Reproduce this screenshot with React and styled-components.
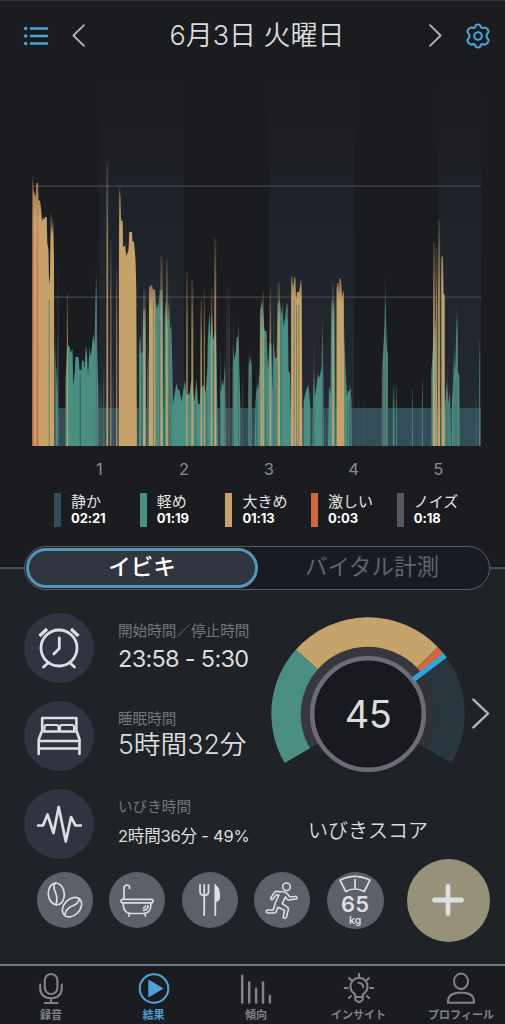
import React from 'react'
import styled, { createGlobalStyle, ThemeProvider } from 'styled-components'

const theme = {
  bg: '#1b1c20',
  panel: '#1f2226',
  blue: '#4da3d6',
  teal: '#4a8f82',
  tan: '#c7a36c',
  orange: '#cf6840',
  quiet: '#344e59',
  noise: '#58595d',
  text: '#dcdddf',
  muted: '#75777a',
  sans: 'Inter, "Noto Sans CJK JP", sans-serif',
}

const GlobalStyle = createGlobalStyle`
  * { box-sizing: border-box; }
  body {
    margin: 0;
    background: ${theme.bg};
  }
`

const Screen = styled.div`
  display: flex;
  flex-direction: column;
  width: 505px;
  height: 1024px;
  overflow: hidden;
  border-top: 1px solid #303136;
  background: linear-gradient(${theme.bg} 567px, ${theme.panel} 567px);
  color: ${props => props.theme.text};
  font-family: ${props => props.theme.sans};
  svg { display: block; flex: none; }
`

const Header = styled.header`
  display: flex;
  align-items: center;
  height: 71px;
  padding: 0 14px 2px 23px;
  h1 {
    flex: 1;
    margin: 0;
    text-align: center;
    font-size: 27px;
    font-weight: 350;
    line-height: 36px;
    white-space: nowrap;
  }
`

const IconButton = styled.button`
  display: flex;
  padding: 0;
  margin: 0 ${props => props.$right || 0}px 0 ${props => props.$left || 0}px;
  border: 0;
  background: none;
  color: ${props => props.$accent ? props.theme.blue : '#b4b5b8'};
`

const ChartBox = styled.div`
  height: 374px;
  padding: 4px 24px 0 32px;
`

const Hours = styled.div`
  display: grid;
  grid-template-columns: repeat(5, 84.75px);
  height: 47px;
  padding-left: 57px;
  text-align: center;
  font-size: 16.5px;
  line-height: 46px;
  color: #8b8c90;
`

const Legend = styled.div`
  display: grid;
  grid-template-columns: repeat(5, 85.7px);
  height: 53px;
  padding-left: 54px;
`

const LegendItem = styled.div`
  height: 34px;
  border-left: 7px solid ${props => props.theme[props.$color]};
  padding-left: 10px;
  white-space: nowrap;
  span, strong { display: block; }
  span {
    font-size: 15px;
    line-height: 18px;
    color: #e2e3e5;
  }
  strong {
    font-size: 13px;
    font-weight: 700;
    line-height: 15px;
    letter-spacing: -0.1px;
    color: #fff;
  }
`

const TabsRow = styled.div`
  display: flex;
  align-items: center;
  height: 44px;
  &::before, &::after {
    content: '';
    height: 2px;
    background: #4c4e52;
  }
  &::before { width: 24px; }
  &::after { flex: 1; }
`

const Tabs = styled.div`
  display: flex;
  width: 466px;
  height: 44px;
  padding: 1px;
  border: 1px solid #5b5d61;
  border-radius: 22px;
  background: #181b23;
`

const Tab = styled.button`
  width: ${props => props.$active ? 232 : 228}px;
  height: 40px;
  padding: 0 0 2px;
  border: ${props => props.$active ? '3px solid #5296ba' : '0'};
  border-radius: 20px;
  background: ${props => props.$active ? '#313541' : 'none'};
  color: ${props => props.$active ? '#fff' : '#626468'};
  font-family: inherit;
  font-size: 22.5px;
  font-weight: ${props => props.$active ? 500 : 400};
  line-height: 32px;
`

const Summary = styled.section`
  display: flex;
  height: 269px;
`

const Stats = styled.div`
  display: flex;
  flex-direction: column;
  gap: 18px;
  width: 247px;
  padding: 23px 0 0 24px;
`

const Stat = styled.div`
  display: flex;
  height: 70px;
  gap: 24px;
`

const Disc = styled.div`
  display: flex;
  flex: none;
  flex-direction: column;
  align-items: center;
  justify-content: center;
  width: ${props => props.$size}px;
  height: ${props => props.$size}px;
  border-radius: 50%;
  background: ${props => props.$bg || '#5c6069'};
  color: #dddee1;
`

const StatText = styled.div`
  white-space: nowrap;
  small {
    display: block;
    height: 33px;
    font-size: 14.6px;
    line-height: 36px;
    color: ${props => props.theme.muted};
  }
  span {
    display: block;
    font-size: ${props => props.$size}px;
    font-weight: ${props => props.$weight || 400};
    line-height: ${props => props.$line}px;
    letter-spacing: ${props => props.$spacing || 0}px;
  }
`

const Score = styled.div`
  display: flex;
  flex-direction: column;
  align-items: center;
  width: 202px;
  margin-left: 20px;
  padding-top: 22.5px;
  p {
    margin: 0;
    font-size: 20px;
    font-weight: 350;
    line-height: 26px;
    padding-top: 43px;
  }
`

const NextScore = styled(IconButton)`
  align-self: flex-start;
  margin: 108px 0 0 3px;
`

const Factors = styled.section`
  display: flex;
  align-items: center;
  height: 105px;
  padding: 0 0 23px 37px;
  gap: 16.4px;
`

const Weight = styled(Disc)`
  justify-content: flex-start;
  padding-top: 3px;
  b {
    font-size: 22px;
    font-weight: 600;
    line-height: 22px;
  }
  i {
    font-size: 10.5px;
    font-style: normal;
    font-weight: 600;
    line-height: 11px;
  }
`

const AddButton = styled(Disc)`
  margin-left: 7px;
`

const NavBar = styled.nav`
  display: flex;
  justify-content: space-between;
  height: 60px;
  border-top: 2px solid #77797c;
  padding: 6px 1px 0 8px;
  background: ${props => props.theme.bg};
`

const NavItem = styled.a`
  display: flex;
  flex-direction: column;
  align-items: center;
  width: 86px;
  color: ${props => props.$active ? props.theme.blue : '#828387'};
  span {
    font-size: 11px;
    font-weight: 600;
    line-height: 16px;
    padding-top: 3px;
    white-space: nowrap;
  }
`

// filled silhouettes, in chart coordinates with the baseline at 446
const areas = [
  ['tan', '32.3,446 32.5,178 33.5,190 35.5,197 36.5,183 38,183 38.5,200 40,201 41,208 42,222 43,217 44,220 45,217 46.7,217 47.3,243 48.5,250 49,285 50,275 51,215 52,235 53.2,222 54,260 54.3,446'],
  ['teal', '54.6,446 54.6,345 55.5,365 56.4,370 57.2,400 57.8,330 58.4,446'],
  ['teal', '65.5,446 65.5,380 67,350 68.5,345 70,348 70.5,353 72.5,349 73.2,386 74.8,372 75.5,357 78.5,357 79.5,370 81.5,370 82,360 83.5,361 84.3,369 86,345 87,355 88,376 89.6,347 90.5,357 91.7,350 92.2,343 93.6,334 94.5,345 95.5,300 96.2,275 96.9,310 97.2,345 98.4,390 98.4,446'],
  ['tan', '118.8,446 119,255 119.5,190 120.4,197 121,220 122.7,221 123,247 124.8,246 125,243 126.2,256 128.5,250 129.3,232 132,232 132.4,241 134,242 134.5,247 135.5,260 136.3,290 136.9,446'],
  ['teal', '139,446 139.3,345 140.2,335 141,354 142.6,352 143,310 145.5,310 146.2,446'],
  ['teal', '147.4,446 147.6,375 148.4,350 149,446'],
  ['teal', '155.6,446 155.8,300 157,308 158.5,303 159.8,290 162.5,290 163,340 163.8,446'],
  ['teal', '164.3,446 164.5,320 165.5,301 166.6,305 167.6,330 168.4,300 169.5,315 170.3,330 171.3,326 172.2,360 173,405 174.5,395 176.5,383 178,390 179.5,390 181.5,402 183,392 185,380 186.3,395 189.5,394 191,383 192,380 193.5,393 194.5,402 196.5,379 198,404 199.6,404 201,388 204,385 205.5,394 207.3,370 207.8,340 209.5,310 210.5,340 212,312 213,340 216,330 217,385 218,446'],
  ['tan', '149,446 149,287 152,285 153,290 155,289 155.6,300 155.6,446'],
  ['teal', '220,446 220,388 221,392 222,380 223.5,386 225,362 226,446'],
  ['teal', '232.5,446 232.7,368 233.4,345 234.2,360 235.8,352 236.5,337 238,337 238.6,326 239.4,370 240.4,408 240.4,446'],
  ['teal', '248.2,446 248.3,400 248.9,354 249.6,364 250.6,356 251.7,365 252,446'],
  ['teal', '254.5,446 255.5,401 257,384 258,391 259.6,370 260,310 262.5,301 264.4,330 266.5,332 268,370 269.5,342 271.5,345 272.3,395 273.2,340 275,358 276.5,358 277.6,305 280,300 281.3,315 282.5,303 283.5,327 285,318 286.7,303 287.7,304 288.5,372 290,372 291.5,446'],
  ['teal', '303.6,446 303.6,402 305,395 306.5,389 308.4,384 309.3,395 310.3,408 310.3,446'],
  ['tan', '291,446 291.2,277 292,276 293,287 294.5,276 295.6,279 296,300 297,292 299,292 300,286 301.2,278 301.7,290 302.4,446'],
  ['teal', '312.5,446 313,395 314,372 315,396 316.3,388 318,374 319.4,378 321.6,368 322.4,325 323.3,375 323.8,446'],
  ['teal', '328,446 329,386 330.5,395 331.3,302 332,299 332.9,310 334.3,298 335.8,446'],
  ['teal', '343.8,446 344,325 345.3,365 347,396 348,392 349.5,390 350.5,388 351.4,402 351.7,446'],
  ['tan', '336.3,446 336.5,290 337.5,283 338.5,283 339,294 339.5,279 340.6,278 341.3,284 342.1,297 343.8,290 344.2,446'],
  ['teal', '382,446 382.2,380 383.3,350 384.5,325 385.3,290 386.4,335 387,350 388,355 388,446'],
  ['teal', '431.4,446 431.4,372 432.5,355 434,330 435.6,320 438,446'],
  ['teal', '445,446 445.2,405 447,380 448.5,405 450,391 450.9,446'],
  ['tan', '441.2,446 441.2,257 443,256 443.5,293 444.7,296 444.8,446'],
  ['teal', '451.7,446 452,402 453,385 454,355 455,375 456,340 456.8,313 457.7,330 458,373 459.3,375 459.6,446'],
]

// thin lines that fade out at the top: colour, x, top, width
const spikes = [
  ['orange', 33.2, 176, 1.2], ['orange', 37.4, 183, 1.8], ['tan', 50.8, 213, 1], ['tan', 52.5, 217, 1.2],
  ['noise', 55.5, 325, 1], ['noise', 58.1, 266, 1],
  ['tan', 67.4, 293, 1.1], ['quiet', 80.2, 365, 0.8], ['noise', 96.2, 265, 1],
  ['noise', 99.8, 382, 1.2], ['noise', 101.5, 390, 1.4], ['teal', 103.8, 367, 0.8],
  ['tan', 107.3, 162, 1.7], ['tan', 110.9, 240, 0.9], ['noise', 113.2, 370, 1.2], ['tan', 116.7, 270, 1],
  ['tan', 119.7, 188, 1.5], ['teal', 139.6, 338, 1], ['noise', 141.6, 300, 1],
  ['tan', 144.3, 290, 2.4], ['noise', 147.7, 330, 1],
  ['tan', 161.5, 256, 2.3], ['tan', 166.9, 260, 1.7], ['noise', 169.3, 280, 1.1], ['noise', 171, 298, 1],
  ['tan', 187, 272, 1.4], ['tan', 192.3, 280, 2], ['tan', 201.2, 300, 1.7], ['tan', 204.3, 289, 1],
  ['tan', 211.6, 289, 1.4], ['tan', 215.2, 239, 2],
  ['noise', 220.5, 350, 1.1], ['noise', 224.9, 350, 1], ['noise', 226.8, 290, 1], ['noise', 229, 286, 1.5],
  ['noise', 233.3, 320, 1], ['noise', 238.5, 316, 1], ['noise', 242.7, 370, 1],
  ['noise', 249, 350, 1], ['noise', 251, 351, 1], ['noise', 257, 370, 1],
  ['tan', 261.3, 300, 1.5], ['tan', 263.2, 292, 1.5], ['tan', 270.4, 290, 1.5], ['noise', 273.8, 305, 1],
  ['tan', 278.8, 282, 2.4], ['tan', 333, 284, 1.7],
  ['noise', 314.1, 342, 1.2], ['noise', 322.5, 313, 1],
  ['noise', 350.2, 382, 1.5], ['noise', 358.6, 396, 0.7], ['noise', 364, 402, 0.7],
  ['noise', 382.3, 355, 1.5], ['noise', 385.4, 278, 1.2], ['noise', 387.4, 330, 0.9],
  ['teal', 393.7, 385, 1.7], ['teal', 396.6, 384, 0.9], ['teal', 412.4, 389, 0.9],
  ['teal', 422.5, 379, 0.9], ['noise', 421, 400, 0.7],
  ['tan', 434, 242, 2], ['tan', 436.4, 248, 1.7], ['tan', 439, 220, 2.2], ['teal', 442, 265, 0.5],
  ['noise', 447.2, 369, 1], ['noise', 454, 335, 1], ['noise', 457, 304, 1],
  ['noise', 476.3, 395, 1], ['teal', 479.6, 340, 1],
]

// narrow gaps between the bars: x, top
const slits = [
  [48.7, 300], [79.9, 375], [101.7, 405], [105.2, 405], [137.5, 408], [142.4, 355], [153.2, 300],
  [159.6, 320], [164.1, 340], [186.2, 400], [195.5, 404], [200, 404], [206.5, 394], [213.3, 350],
  [250.2, 375], [256.4, 400], [265.5, 340], [276.8, 365], [280.7, 320], [293.7, 300], [296.1, 305],
  [298.4, 305], [332, 310], [335.5, 300], [347.2, 400], [349, 400], [383.4, 370], [437.4, 300],
  [440.6, 290], [446, 405], [448.6, 405], [455.4, 380],
]

const NoiseChart = () => (
  <svg width="449" height="370" viewBox="32 76 449 370">
    <defs>
      <linearGradient id="band" x1="0" y1="0" x2="0" y2="1">
        <stop offset="0" stopColor="#1b1c20" />
        <stop offset="0.25" stopColor="#1e2026" />
        <stop offset="0.32" stopColor="#1e2229" />
        <stop offset="1" stopColor="#252932" />
      </linearGradient>
      {['tan', 'teal', 'orange', 'noise', 'quiet'].map(name => (
        <linearGradient key={name} id={`fade-${name}`} x1="0" y1="0" x2="0" y2="1">
          <stop offset="0" stopColor={theme[name]} stopOpacity="0.15" />
          <stop offset="0.3" stopColor={theme[name]} stopOpacity="0.7" />
          <stop offset="1" stopColor={theme[name]} stopOpacity="1" />
        </linearGradient>
      ))}
      {['tan', 'teal'].map(name => (
        <linearGradient key={name} id={`area-${name}`} x1="0" y1="0" x2="0" y2="1">
          <stop offset="0" stopColor={theme[name]} stopOpacity="0.65" />
          <stop offset="0.15" stopColor={theme[name]} />
        </linearGradient>
      ))}
    </defs>
    <rect x="99" y="76" width="85" height="370" fill="url(#band)" />
    <rect x="269" y="76" width="85" height="370" fill="url(#band)" />
    <rect x="438.5" y="76" width="43" height="370" fill="url(#band)" />
    <path d="M33 186.2H481M33 297.2H481" stroke="#45474c" strokeWidth="1.3" />
    <rect x="57" y="408" width="424" height="38" fill={theme.quiet} />
    {areas.map(([color, points]) => (
      <polygon key={points} points={points} fill={`url(#area-${color})`} />
    ))}
    {slits.map(([x, top]) => (
      <rect key={x} x={x} y={top} width="0.8" height={446 - top} fill="#2f6560" opacity="0.7" />
    ))}
    {spikes.map(([color, x, top, w]) => (
      <rect
        key={x}
        x={x - w / 2}
        y={top}
        width={w}
        height={446 - top}
        fill={`url(#fade-${color})`}
        opacity={color === 'noise' ? 0.75 : 1}
      />
    ))}
  </svg>
)

const polar = (r, deg) => {
  const a = deg * Math.PI / 180
  return `${(101 + r * Math.cos(a)).toFixed(2)} ${(101 - r * Math.sin(a)).toFixed(2)}`
}

// ring segment running clockwise from one angle to another
const segment = (inner, outer, from, to) => {
  const large = from - to > 180 ? 1 : 0
  return `M${polar(outer, from)}A${outer} ${outer} 0 ${large} 1 ${polar(outer, to)}L${polar(inner, to)}A${inner} ${inner} 0 ${large} 0 ${polar(inner, from)}Z`
}

const GaugeBox = styled.div`
  display: grid;
  place-items: center;
  width: 202px;
  height: 162px;
  svg, span { grid-area: 1 / 1; }
  span {
    padding-top: 41px;
    font-size: 38px;
    font-weight: 400;
    line-height: 44px;
    letter-spacing: -0.5px;
  }
`

const Gauge = ({ score }) => (
  <GaugeBox>
    <svg width="202" height="162" viewBox="0 0 202 162">
      <path d={segment(56, 68, 210.5, 37.7)} fill="#37383d" />
      <path d={segment(56, 68, 37.7, -30.5)} fill="#323136" />
      <path d={segment(67.3, 96.7, 210.5, 138.2)} fill={theme.teal} />
      <path d={segment(67.3, 96.7, 138.2, 43.6)} fill={theme.tan} />
      <path d={segment(67.3, 96.7, 43.6, 38)} fill={theme.orange} />
      <path d={segment(67.3, 96.7, 38, -30.5)} fill="#28363d" />
      <circle cx="101" cy="101" r="55.8" fill="#181a1f" stroke="#6b6c76" strokeWidth="4.6" />
      <path d={`M${polar(57, 37.2)}L${polar(97, 37.2)}`} stroke="#2da6de" strokeWidth="5.2" />
    </svg>
    <span>{score}</span>
  </GaugeBox>
)

const line = {
  fill: 'none',
  stroke: 'currentColor',
  strokeLinecap: 'round',
  strokeLinejoin: 'round',
}

const ListIcon = () => (
  <svg width="26" height="20" viewBox="0 0 26 20" {...line} strokeWidth="2.5">
    <path d="M8 2.5H24M8 10H24M8 17.5H24" />
    <path d="M2.6 2.5h.1M2.6 10h.1M2.6 17.5h.1" strokeWidth="3.6" />
  </svg>
)

const Chevron = ({ left, width = 13, height = 23 }) => (
  <svg width={width} height={height} viewBox="0 0 13 23" preserveAspectRatio="none" {...line} strokeWidth="1.8">
    <path d={left ? 'M12 1.2L1.4 11.5L12 21.8' : 'M1 1.2L11.6 11.5L1 21.8'} />
  </svg>
)

const GearIcon = () => (
  <svg width="26" height="26" viewBox="0 0 26 26" {...line} strokeWidth="2.1">
    <circle cx="13" cy="13" r="3.8" />
    <path d="M10.4 3.4Q10.7 1.5 13 1.5T15.6 3.4Q16 5 17.7 5Q19.3 4 21 4.9Q22.8 6 23.4 7.6Q24 9.2 22.6 10.3Q21.6 11.2 21.6 13Q21.6 14.8 22.6 15.7Q24 16.8 23.4 18.4Q22.8 20 21 21.1Q19.3 22 17.7 21Q16 21 15.6 22.6Q15.3 24.5 13 24.5T10.4 22.6Q10 21 8.3 21Q6.7 22 5 21.1Q3.2 20 2.6 18.4Q2 16.8 3.4 15.7Q4.4 14.8 4.4 13Q4.4 11.2 3.4 10.3Q2 9.2 2.6 7.6Q3.2 6 5 4.9Q6.7 4 8.3 5Q10 5 10.4 3.4Z" />
  </svg>
)

const AlarmIcon = () => (
  <svg width="46" height="44" viewBox="0 0 46 44" {...line} strokeWidth="2.8">
    <circle cx="23" cy="22" r="18" />
    <path d="M23.3 12V22.5L17.8 28M12.5 36.5L7.5 41M33.5 36.5L38.5 41" />
    <path d="M3.5 10L11 3M42.5 10L35 3" strokeWidth="3.4" strokeLinecap="butt" />
  </svg>
)

const BedIcon = () => (
  <svg width="46" height="40" viewBox="0 0 46 40" {...line} strokeWidth="2.6">
    <path d="M6.2 14.5V2H40.4V14.5M6.2 14.5L2.7 23.5V38M40.4 14.5L43.5 23.5V38M2.7 25H43.5M2.7 32.5H43.5M6.5 15.5H40" />
    <path d="M8.5 14V11Q8.5 9 10.5 9H20.5Q22.5 9 22.5 11V14M24 14V11Q24 9 26 9H36Q38 9 38 11V14" strokeWidth="2.1" />
  </svg>
)

const WaveIcon = () => (
  <svg width="46" height="38" viewBox="0 0 46 38" {...line} strokeWidth="2.7">
    <path d="M2 20.5H7L11.5 9.5L17.5 28L22.7 2L29.8 36.5L35 12L39.5 20.5H45" />
  </svg>
)

const BeansIcon = () => (
  <svg width="36" height="36" viewBox="0 0 36 36" {...line} strokeWidth="1.7">
    <ellipse cx="9.3" cy="11.9" rx="8" ry="10.9" transform="rotate(-5 9.3 11.9)" />
    <path d="M7.9 1.2Q5.8 5.6 8.7 11Q10.8 16.5 9 22.4" />
    <ellipse cx="25" cy="25.2" rx="11.1" ry="8" transform="rotate(-46 25 25.2)" />
    <path d="M32.5 17Q30.6 22.5 25.8 23.7Q19.3 26 17.7 32.8" />
  </svg>
)

const BathIcon = () => (
  <svg width="34" height="34" viewBox="0 0 34 34" {...line} strokeWidth="1.7">
    <rect x="1" y="16.3" width="32" height="3.5" rx="1.7" />
    <path d="M4 16V5Q4 2 7 2Q9.5 2 9.5 4.3V5.5M3.3 20V22Q3.5 30.5 12 30.5H22.5Q31 30.5 30.8 22V20M9.5 30.8L8.7 33M24.7 30.8L25.5 33M28 22.5Q28 27 23.4 27.4M25.5 23.2Q25.2 24.7 23.5 24.8" />
  </svg>
)

const CutleryIcon = () => (
  <svg width="24" height="34" viewBox="0 0 24 34" {...line} strokeWidth="1.8">
    <path d="M2 2V8.5Q2 12.3 6.2 12.6Q10.5 12.3 10.5 8.5V2M6.2 2V32" />
    <path d="M17.3 32V2Q22.5 3.5 22 15Q21.5 18.5 18 18.8" fill="currentColor" stroke="none" />
    <path d="M17.3 32V2" />
  </svg>
)

const RunIcon = () => (
  <svg width="34" height="37" viewBox="0 0 34 37" {...line} strokeWidth="1.6">
    <circle cx="21.5" cy="4.8" r="3.8" />
    <path d="M17.8 9.8L11.5 9.4Q10 9.5 9.2 10.6L5.7 16Q5.6 18 7.4 17.6L11.5 12.7L14 13L10.4 20.5L8.3 28H2.7Q1 28.2 1.4 30.1Q1.8 31 3 31H9.6Q11 30.8 11.4 29.2L12.8 25.3L19.5 28.3L18.2 35Q18.4 36.5 20 36.2Q21 36.1 21.5 34.7L23.4 27.4Q23.5 25.9 22.3 25.2L17.3 21.7L20.4 14.9L22.1 17.2Q22.9 18.2 24.3 18L31 17Q32.4 16.3 31.7 14.9Q31.2 14.2 30 14.5L25 15L21.8 11.3Q20.3 9.9 17.8 9.8Z" />
  </svg>
)

const ScaleIcon = () => (
  <svg width="34" height="18" viewBox="0 0 34 18" {...line} strokeWidth="1.7">
    <path d="M2 5.2Q16.7 -2.5 32 5.2L26.2 16.5Q17 11.5 7.8 16.5ZM17 4.5V12.5" />
  </svg>
)

const PlusIcon = () => (
  <svg width="34" height="34" viewBox="0 0 34 34" {...line} strokeWidth="4.8">
    <path d="M17 3.5V30.5M3.5 17H30.5" />
  </svg>
)

const MicIcon = () => (
  <svg width="32" height="32" viewBox="0 0 32 32" {...line} strokeWidth="2.1">
    <rect x="9.8" y="2" width="12.6" height="20" rx="6.3" />
    <path d="M5.2 12.5V16Q5.5 25.8 16 26.3Q26.5 25.8 26.8 16V12.5M16 26.3V31M9.8 31H22.5" />
  </svg>
)

const PlayIcon = () => (
  <svg width="32" height="32" viewBox="0 0 32 32" {...line} strokeWidth="2.1">
    <circle cx="16" cy="16.5" r="14.3" />
    <path d="M11 8.5V24.5L24.4 16.5Z" fill="currentColor" strokeWidth="1.4" />
  </svg>
)

const TrendIcon = () => (
  <svg width="32" height="32" viewBox="0 0 32 32" {...line} strokeWidth="2.5">
    <path d="M2.2 3.8V30.4M9.2 10.5V30.4M16.1 16.8V30.4M23 10.5V30.4M29.9 24V30.4" />
  </svg>
)

const BulbIcon = () => (
  <svg width="32" height="32" viewBox="0 0 32 32" {...line} strokeWidth="2.1">
    <path d="M12.2 25V23Q12 22 10.4 21A8.6 8.6 0 1 1 21.6 21Q20 22 19.8 23V25ZM12.2 25V27Q12.4 29 14.3 29.3Q16 31.3 17.7 29.3Q19.6 29 19.8 27V25M15.5 10.8Q19.8 11 20.3 15" />
    <path d="M16 1.8V4.6M1.8 16H4.6M27.4 16H30.2M6 6L8 8M26 6L24 8M6 26L8 24M26 26L24 24" />
  </svg>
)

const ProfileIcon = () => (
  <svg width="32" height="32" viewBox="0 0 32 32" {...line} strokeWidth="2">
    <ellipse cx="16" cy="9.3" rx="7" ry="7.7" />
    <path d="M3 30.8Q2.2 21.7 13 20.7H19Q29.8 21.7 29 30.8Z" />
  </svg>
)

const legend = [
  { label: '静か', time: '02:21', color: 'quiet' },
  { label: '軽め', time: '01:19', color: 'teal' },
  { label: '大きめ', time: '01:13', color: 'tan' },
  { label: '激しい', time: '0:03', color: 'orange' },
  { label: 'ノイズ', time: '0:18', color: 'noise' },
]

const stats = [
  { icon: <AlarmIcon />, label: '開始時間／停止時間', value: '23:58 - 5:30', size: 23.5, line: 26, spacing: -0.7 },
  { icon: <BedIcon />, label: '睡眠時間', value: '5時間32分', size: 26.7, line: 20, weight: 350 },
  { icon: <WaveIcon />, label: 'いびき時間', value: '2時間36分 - 49%', size: 16.5, line: 29, spacing: -0.2 },
]

const nav = [
  { icon: <MicIcon />, label: '録音' },
  { icon: <PlayIcon />, label: '結果', active: true },
  { icon: <TrendIcon />, label: '傾向' },
  { icon: <BulbIcon />, label: 'インサイト' },
  { icon: <ProfileIcon />, label: 'プロフィール' },
]

export default function App() {
  return (
    <ThemeProvider theme={theme}>
      <GlobalStyle />
      <Screen>
        <Header>
          <IconButton $accent $right={23}><ListIcon /></IconButton>
          <IconButton><Chevron left /></IconButton>
          <h1>6月3日 火曜日</h1>
          <IconButton $right={23}><Chevron /></IconButton>
          <IconButton $accent><GearIcon /></IconButton>
        </Header>

        <ChartBox><NoiseChart /></ChartBox>
        <Hours>
          {[1, 2, 3, 4, 5].map(h => <span key={h}>{h}</span>)}
        </Hours>
        <Legend>
          {legend.map(item => (
            <LegendItem key={item.label} $color={item.color}>
              <span>{item.label}</span>
              <strong>{item.time}</strong>
            </LegendItem>
          ))}
        </Legend>

        <TabsRow>
          <Tabs>
            <Tab $active>イビキ</Tab>
            <Tab>バイタル計測</Tab>
          </Tabs>
        </TabsRow>

        <Summary>
          <Stats>
            {stats.map(s => (
              <Stat key={s.label}>
                <Disc $size={70} $bg="#313440">{s.icon}</Disc>
                <StatText $size={s.size} $line={s.line} $weight={s.weight} $spacing={s.spacing}>
                  <small>{s.label}</small>
                  <span>{s.value}</span>
                </StatText>
              </Stat>
            ))}
          </Stats>
          <Score>
            <Gauge score={45} />
            <p>いびきスコア</p>
          </Score>
          <NextScore><Chevron width={18} height={31} /></NextScore>
        </Summary>

        <Factors>
          <Disc $size={56}><BeansIcon /></Disc>
          <Disc $size={56}><BathIcon /></Disc>
          <Disc $size={56}><CutleryIcon /></Disc>
          <Disc $size={56}><RunIcon /></Disc>
          <Weight $size={57}>
            <ScaleIcon />
            <b>65</b>
            <i>kg</i>
          </Weight>
          <AddButton $size={83} $bg="#98917a"><PlusIcon /></AddButton>
        </Factors>

        <NavBar>
          {nav.map(item => (
            <NavItem key={item.label} $active={item.active}>
              {item.icon}
              <span>{item.label}</span>
            </NavItem>
          ))}
        </NavBar>
      </Screen>
    </ThemeProvider>
  )
}
